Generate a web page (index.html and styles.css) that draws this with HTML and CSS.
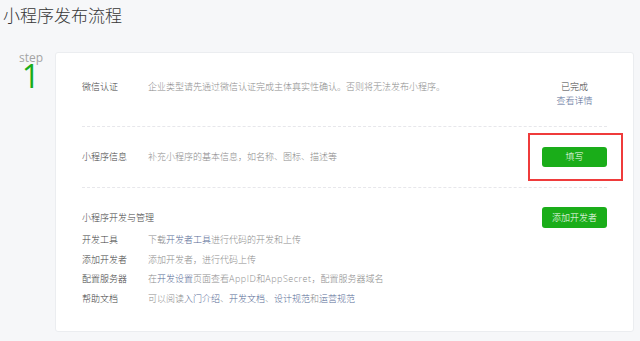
FILE: index.html
```html
<!DOCTYPE html>
<html lang="zh-CN">
<head>
    <meta charset="UTF-8" />
    <meta name="viewport" content="width=device-width, initial-scale=1.0"/>
    <title>小程序发布流程</title>
    <link rel="stylesheet" href="styles.css">
</head>
<body>
    <h2 class="page-title">小程序发布流程</h2>
    <div class="main">
        <div class="step">
            <div class="step-label">step</div>
            <div class="step-num">1</div>
        </div>
        <div class="card">
            <div class="row row-auth">
                <div class="row-label">微信认证</div>
                <div class="row-desc">企业类型请先通过微信认证完成主体真实性确认。否则将无法发布小程序。</div>
                <div class="row-side">
                    <div class="done">已完成</div>
                    <a class="link" href="#">查看详情</a>
                </div>
            </div>
            <div class="row row-info">
                <div class="row-label">小程序信息</div>
                <div class="row-desc">补充小程序的基本信息，如名称、图标、描述等</div>
                <div class="row-side">
                    <span class="mark">
                        <a class="button" href="#">填写</a>
                    </span>
                </div>
            </div>
            <div class="dev">
                <div class="dev-head">
                    <div class="dev-title">小程序开发与管理</div>
                    <a class="button button-tall" href="#">添加开发者</a>
                </div>
                <ul class="dev-list">
                    <li><span class="row-label">开发工具</span><span class="row-desc">下载<a class="link" href="#">开发者工具</a>进行代码的开发和上传</span></li>
                    <li><span class="row-label">添加开发者</span><span class="row-desc">添加开发者，进行代码上传</span></li>
                    <li><span class="row-label">配置服务器</span><span class="row-desc">在<a class="link" href="#">开发设置</a>页面查看<span class="latin">AppID</span>和<span class="latin">AppSecret</span>，配置服务器域名</span></li>
                    <li><span class="row-label">帮助文档</span><span class="row-desc">可以阅读<a class="link" href="#">入门介绍</a>、<a class="link" href="#">开发文档</a>、<a class="link" href="#">设计规范</a>和<a class="link" href="#">运营规范</a></span></li>
                </ul>
            </div>
        </div>
    </div>
</body>
</html>
```

FILE: styles.css
```css
* {
    margin: 0;
    padding: 0;
    box-sizing: border-box;
}

:root {
    --green: #1aad19;
    --text: #3e3e3e;
    --muted: #8c8c8c;
    --link: #576b95;
    --line: #e7e7eb;
}

body {
    background: #f6f7f9;
    font-family: "Open Sans", "Noto Sans CJK SC", sans-serif;
    font-weight: 300;
    color: var(--text);
    font-size: 9px;
}

a {
    text-decoration: none;
}

.page-title {
    font-size: 17px;
    font-weight: 300;
    line-height: 24px;
    padding: 4px 3px 0;
    color: #353535;
}

.main {
    display: flex;
    margin-top: 24px;
    height: 280px;
}

.step {
    width: 55px;
    padding-left: 7px;
    text-align: center;
}

.step-label {
    font-size: 12px;
    line-height: 12px;
    color: #a3a3a3;
    font-weight: normal;
}

.step-num {
    font-size: 32px;
    line-height: 32px;
    margin-top: -4px;
    color: var(--green);
    font-weight: normal;
}

.card {
    flex: 1;
    margin-right: 6px;
    background: #fff;
    border: 1px solid #ebedf0;
    border-radius: 3px;
    padding: 0 26px;
}

.row {
    display: flex;
    border-bottom: 1px dashed var(--line);
    line-height: 14px;
}

.row-auth {
    align-items: flex-start;
    padding: 27px 0 18px;
}

.row-info {
    align-items: center;
    height: 61px;
}

.row-label {
    width: 66px;
    flex-shrink: 0;
    color: var(--text);
}

.row-desc {
    flex: 1;
    color: var(--muted);
}

.latin {
    letter-spacing: 0.5px;
}

.row-side {
    width: 65px;
    text-align: center;
}

.done {
    color: var(--text);
}

.link {
    color: var(--link);
}

.mark {
    position: relative;
    display: block;
}

.mark::after {
    content: '';
    position: absolute;
    top: -14px;
    bottom: -14px;
    left: -14px;
    right: -16px;
    border: 2px solid #ef3b3b;
}

.button {
    display: block;
    height: 20px;
    line-height: 20px;
    background: var(--green);
    color: #fff;
    border-radius: 3px;
    text-align: center;
}

.button-tall {
    width: 65px;
    height: 21px;
    line-height: 21px;
}

.dev {
    padding-top: 19px;
}

.dev-head {
    display: flex;
    align-items: center;
    justify-content: space-between;
}

.dev-list {
    list-style: none;
    margin-top: 2px;
}

.dev-list li {
    display: flex;
    line-height: 19.7px;
}
```
